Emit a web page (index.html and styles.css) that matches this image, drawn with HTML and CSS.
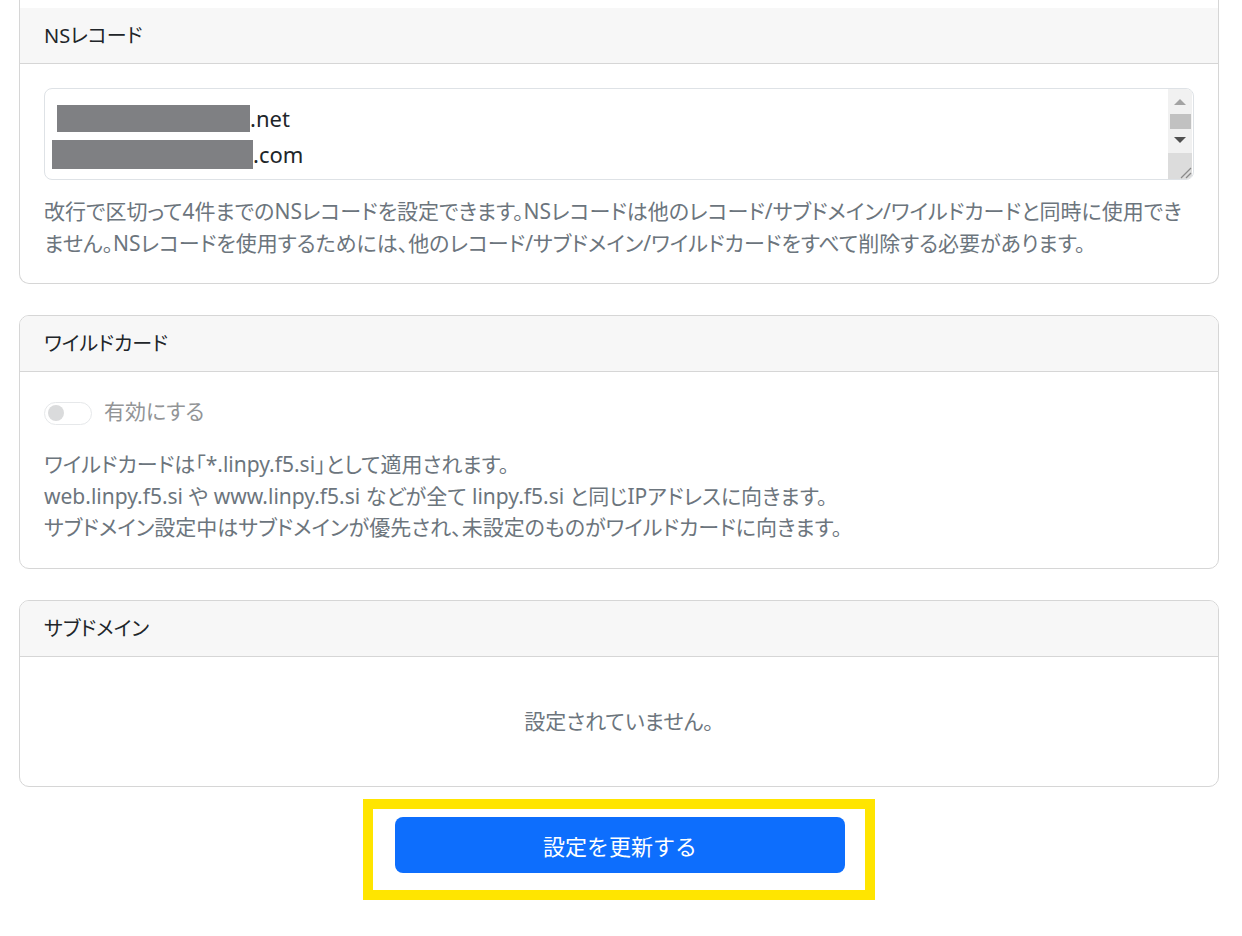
FILE: index.html
```html
<!DOCTYPE html>
<html lang="ja">
<head>
    <meta charset="UTF-8">
    <meta name="viewport" content="width=device-width, initial-scale=1.0">
    <title>ドメイン設定</title>
    <link rel="stylesheet" href="styles.css">
</head>
<body>
    <main class="page">
        <!-- NS record card (top is scrolled off) -->
        <section class="card card-cut">
            <div class="card-header">NSレコード</div>
            <div class="card-body">
                <div class="ns-box">
                    <div class="ns-lines">
                        <div class="ns-line"><span class="redact redact-a"></span>.net</div>
                        <div class="ns-line"><span class="redact redact-b"></span>.com</div>
                    </div>
                    <div class="scrollbar">
                        <div class="sb-track">
                            <span class="sb-up"></span>
                            <span class="sb-thumb"></span>
                            <span class="sb-down"></span>
                        </div>
                        <div class="sb-corner">
                            <svg width="14" height="14" viewBox="0 0 14 14">
                                <line x1="3" y1="13" x2="13" y2="3" stroke="#8a8a8a" stroke-width="1.2"/>
                                <line x1="8" y1="13" x2="13" y2="8" stroke="#8a8a8a" stroke-width="1.2"/>
                            </svg>
                        </div>
                    </div>
                </div>
                <p class="help">改行で区切って4件までのNSレコードを設定できます。NSレコードは他のレコード/サブドメイン/ワイルドカードと同時に使用できません。NSレコードを使用するためには、他のレコード/サブドメイン/ワイルドカードをすべて削除する必要があります。</p>
            </div>
        </section>

        <!-- Wildcard card -->
        <section class="card">
            <div class="card-header">ワイルドカード</div>
            <div class="card-body">
                <label class="switch-row">
                    <span class="switch"><span class="knob"></span></span>
                    <span class="switch-label">有効にする</span>
                </label>
                <p class="note">
                    ワイルドカードは「*.linpy.f5.si」として適用されます。<br>
                    web.linpy.f5.si や www.linpy.f5.si などが全て linpy.f5.si と同じIPアドレスに向きます。<br>
                    サブドメイン設定中はサブドメインが優先され、未設定のものがワイルドカードに向きます。
                </p>
            </div>
        </section>

        <!-- Subdomain card -->
        <section class="card">
            <div class="card-header">サブドメイン</div>
            <div class="card-body empty">設定されていません。</div>
        </section>

        <div class="submit-area">
            <div class="highlight">
                <button class="btn-primary" type="button">設定を更新する</button>
            </div>
        </div>
    </main>
</body>
</html>
```
FILE: styles.css
```css
/* General Reset */
* {
    margin: 0;
    padding: 0;
    box-sizing: border-box;
}

body {
    background: #FFFFFF;
    color: #212529;
    font-family: "Noto Sans", "Noto Sans CJK JP", sans-serif;
    font-feature-settings: "palt";
    font-size: 21px;
    line-height: 31.5px;
}

.page {
    width: 1200px;
    margin-left: 19px;
    display: flex;
    flex-direction: column;
}

/* Cards */
.card {
    border: 1px solid #d6d6d6;
    border-radius: 10px;
    margin-bottom: 31px;
    overflow: hidden;
}

.card-cut {
    border-top: 0;
    border-radius: 0 0 10px 10px;
    padding-top: 8px;
}

.card-header {
    background: #F7F7F7;
    border-bottom: 1px solid #d6d6d6;
    padding: 12px 24px 11px;
    font-size: 20px;
    line-height: 32px;
    color: #212529;
}

.card-body {
    padding: 24px;
}

/* NS record box */
.ns-box {
    display: flex;
    height: 92px;
    border: 1px solid #dee2e6;
    border-radius: 8px;
    overflow: hidden;
}

.ns-lines {
    flex: 1;
    padding: 11px 12px;
    font-size: 22px;
    line-height: 36px;
    color: #212529;
}

.ns-line {
    display: flex;
    align-items: center;
    height: 36px;
}

.redact {
    display: inline-block;
    background: #7F8083;
}

.redact-a {
    width: 193px;
    height: 27px;
}

.redact-b {
    width: 201px;
    height: 29px;
    margin-left: -5px;
}

.scrollbar {
    width: 24px;
    margin-right: 1px;
    display: flex;
    flex-direction: column;
}

.sb-track {
    flex: 1;
    background: #F1F1F1;
    display: flex;
    flex-direction: column;
    align-items: center;
    padding-top: 10px;
}

.sb-up {
    width: 0;
    height: 0;
    border-left: 6px solid transparent;
    border-right: 6px solid transparent;
    border-bottom: 6px solid #A3A3A3;
}

.sb-thumb {
    width: 21px;
    height: 15px;
    background: #C1C1C1;
    margin-top: 9px;
}

.sb-down {
    width: 0;
    height: 0;
    border-left: 6px solid transparent;
    border-right: 6px solid transparent;
    border-top: 6px solid #505050;
    margin-top: 8px;
}

.sb-corner {
    height: 26px;
    background: #DCDCDC;
    display: flex;
    align-items: flex-end;
    justify-content: flex-end;
}

.help {
    margin-top: 16px;
    color: #6c757d;
}

/* Switch */
.switch-row {
    display: flex;
    align-items: center;
    gap: 12px;
    height: 32px;
}

.switch {
    width: 48px;
    height: 23px;
    border: 1px solid #E6E8EA;
    border-radius: 12px;
    display: flex;
    align-items: center;
    padding-left: 3px;
    margin-top: 2px;
}

.knob {
    width: 16px;
    height: 16px;
    border-radius: 50%;
    background: #DADBDC;
}

.switch-label {
    color: #929496;
}

.note {
    margin-top: 21px;
    color: #6c757d;
}

.empty {
    padding: 49px 24px 49px;
    text-align: center;
    color: #6c757d;
}

/* Submit */
.submit-area {
    display: flex;
    justify-content: center;
    margin-top: -19px;
}

.highlight {
    border: 10px solid #FFE500;
    padding: 8px 20px 17px 22px;
}

.btn-primary {
    width: 450px;
    height: 56px;
    background: #0D6EFD;
    color: #FFFFFF;
    border: 0;
    border-radius: 8px;
    font-family: inherit;
    font-size: 22px;
}
```
